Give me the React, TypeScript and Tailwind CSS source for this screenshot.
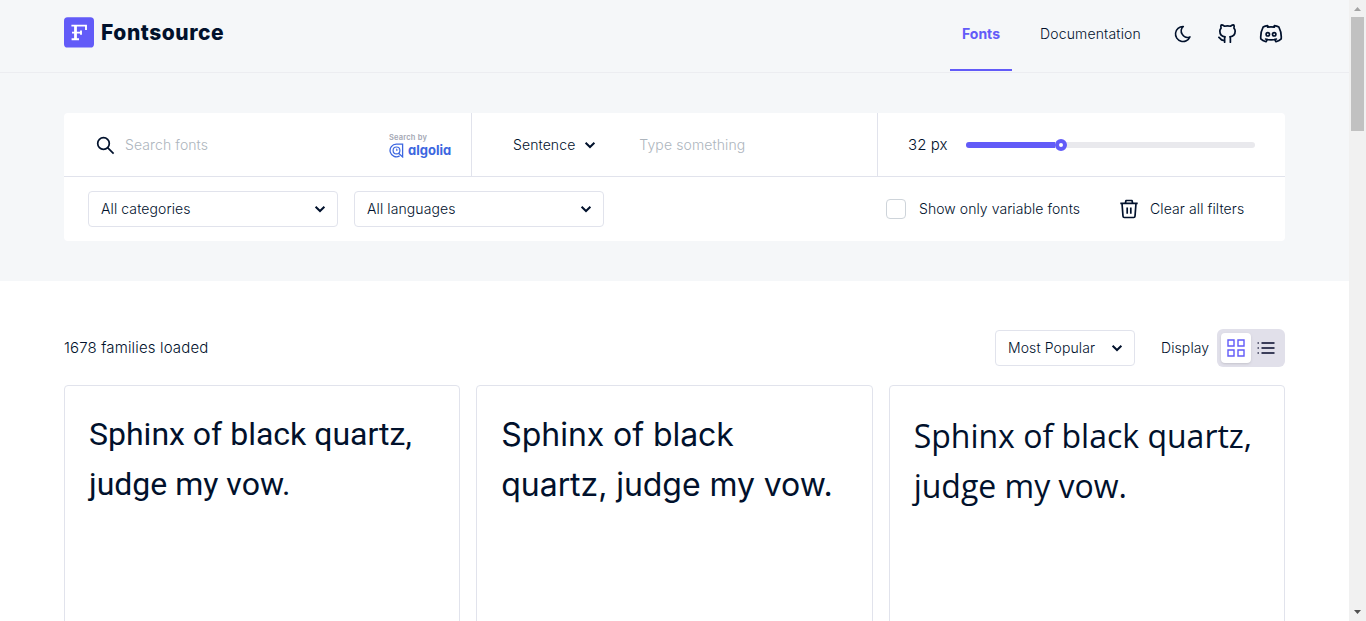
import React from "react";
import { TbBrandGithub, TbMoon } from "react-icons/tb";

function Chevron() {
  return (
    <svg width="12" height="8" viewBox="0 0 12 8" fill="none" className="shrink-0">
      <path d="M1.6 1.8 6 6 10.4 1.8" stroke="#01112c" strokeWidth="2" />
    </svg>
  );
}

function Logo() {
  return (
    <svg width="30" height="31" viewBox="0 0 30 31" className="shrink-0">
      <rect y=".3" width="30" height="30.2" rx="3.6" fill="#625bf8" />
      <path d="M7.4 8.6H22V13M7.6 22.2H15M8 15.6H17.6M17 13.4V17.8" stroke="#fff" strokeWidth="1.9" fill="none" />
      <path d="M11.5 8.6V22.2" stroke="#fff" strokeWidth="2.8" />
    </svg>
  );
}

function DiscordIcon() {
  return (
    <svg
      width="24"
      height="24"
      viewBox="0 0 24 24"
      fill="none"
      stroke="currentColor"
      strokeWidth="1.7"
      strokeLinecap="round"
      strokeLinejoin="round"
    >
      <path d="M9.2 5 8.6 3.700C6.900 3.900 5.400 4.400 4.100 5.100 2.300 8.500 1.400 12.100 1.800 16.900c1.600 1.600 3.300 2.200 5.200 2.800l1.300-2.200M14.800 5l.6-1.300c1.700.2 3.200.7 4.500 1.400 1.800 3.400 2.700 7 2.300 11.800-1.600 1.600-3.300 2.200-5.200 2.800l-1.300-2.200M8.600 5.200c2.300-.4 4.500-.4 6.800 0M6.600 17c3.500 1.200 7.300 1.200 10.800 0" />
      <circle cx="8.800" cy="12.300" r="1.700" />
      <circle cx="15.200" cy="12.300" r="1.700" />
    </svg>
  );
}

function AlgoliaMark() {
  return (
    <svg width="15" height="15" viewBox="0 0 15 15" fill="none" stroke="#3c66e0">
      <path d="M10.6 12.9A6.3 6.3 0 1 1 7.4 1.2H13.6V13.9L9.6 10.3" strokeWidth="1.3" />
      <circle cx="7.5" cy="7.4" r="3.4" strokeWidth="1.2" />
      <path d="M7.5 5.6V7.6L9.2 6.6" strokeWidth=".8" />
    </svg>
  );
}

function Select({ label, className }: { label: string; className: string }) {
  return (
    <button className={`flex h-9 items-center justify-between rounded-[4px] border border-[#e1e3ec] bg-white pr-[11px] pl-3 ${className}`}>
      <span>{label}</span>
      <Chevron />
    </button>
  );
}

function Card({ lines, font }: { lines: string[]; font: string }) {
  return (
    <article className="h-[332px] flex-1 rounded-[4px] border border-[#e1e3ec] px-6">
      <p className={`text-[32px] leading-[50px] whitespace-nowrap ${font}`}>
        {lines[0]}
        <br />
        {lines[1]}
      </p>
    </article>
  );
}

export default function App() {
  return (
    <div className="flex h-[621px] overflow-hidden bg-white font-['Inter',sans-serif] text-sm leading-5 font-light tracking-[0.1px] text-[#01112c]">
      <div className="w-[1349px] shrink-0">
        <header className="flex h-[73px] justify-between border-b border-[#ecedf1] bg-[#f5f7f9] pr-14 pl-16">
          <div className="flex items-start gap-[7px] pt-[17px]">
            <Logo />
            <span className="text-[21px] leading-[31px] font-extrabold tracking-[0.55px]">Fontsource</span>
          </div>
          <nav className="flex items-start">
            <a className="flex h-[71px] w-[62px] justify-center border-b-2 border-[#625bf8] pt-6 font-bold tracking-normal text-[#625bf8]">Fonts</a>
            <a className="ml-7 w-[121px] pt-6 tracking-[0.15px]">Documentation</a>
            <div className="flex h-[67px] items-center">
              <div className="flex w-11 justify-center">
                <TbMoon size={20} strokeWidth={1.9} />
              </div>
              <div className="flex w-11 justify-center">
                <TbBrandGithub size={23} strokeWidth={1.8} />
              </div>
              <div className="flex w-11 justify-center">
                <DiscordIcon />
              </div>
            </div>
          </nav>
        </header>
        <section className="h-[208px] bg-[#f5f7f9] px-16 pt-10">
          <div className="h-32 rounded-[4px] bg-white">
            <div className="flex h-16 border-b border-[#e1e3ec]">
              <div className="flex w-[408px] items-center border-r border-[#e1e3ec] pr-[19px] pl-8">
                <svg width="19" height="19" viewBox="0 0 19 19" fill="none" stroke="#01112c" strokeWidth="1.7" className="mt-px">
                  <circle cx="7.5" cy="7.5" r="5.8" />
                  <path d="m11.6 11.6 6 6" />
                </svg>
                <span className="ml-[10px] flex-1 text-[#adb5bd]">Search fonts</span>
                <div className="flex w-[63px] flex-col pt-[2px]">
                  <span className="text-[7.5px] leading-[9px] font-semibold tracking-[0.2px] text-[#a3a7b3]">Search by</span>
                  <div className="flex items-center gap-1">
                    <AlgoliaMark />
                    <span className="text-[13px] leading-[16px] font-bold tracking-normal text-[#3c66e0] [font-feature-settings:'cv11']">algolia</span>
                  </div>
                </div>
              </div>
              <div className="flex w-[406px] items-center border-r border-[#e1e3ec] pl-[41px]">
                <span className="mr-[9px]">Sentence</span>
                <Chevron />
                <span className="ml-[43px] text-[#adb5bd]">Type something</span>
              </div>
              <div className="flex flex-1 items-center pl-[30px]">
                <span className="w-[58px] text-[15px]">32 px</span>
                <div className="flex h-[6px] w-[289px] items-center rounded-full bg-[#e9e9ed]">
                  <div className="h-[6px] w-[89px] rounded-l-full bg-[#625bf8]" />
                  <div className="size-3 rounded-full border-4 border-[#625bf8] bg-white" />
                </div>
              </div>
            </div>
            <div className="flex h-16 items-center px-6">
              <Select label="All categories" className="w-[250px]" />
              <Select label="All languages" className="ml-4 w-[250px]" />
              <div className="ml-[282px] size-5 rounded-[4px] border border-[#ced4da]" />
              <span className="ml-[13px] w-[201px] tracking-[0.06px]">Show only variable fonts</span>
              <svg width="18" height="20" viewBox="0 0 18 20" fill="none" stroke="#01112c" strokeWidth="1.7" strokeLinejoin="round" className="shrink-0">
                <path d="M.3 4.3h17.4M5.4 4l.6-2.5h6l.6 2.5M2 4.3l1 13q.1 1.2 1.3 1.2h9.4q1.2 0 1.3-1.2l1-13M7.2 8.5v6.3M10.8 8.5v6.3" />
              </svg>
              <span className="ml-3">Clear all filters</span>
            </div>
          </div>
        </section>
        <main className="px-16 pt-12">
          <div className="flex h-[38px] items-center">
            <span className="flex-1 text-[15px] tracking-[0.15px]">1678 families loaded</span>
            <Select label="Most Popular" className="w-[140px]" />
            <span className="ml-[26px] w-14">Display</span>
            <div className="flex h-[38px] w-[68px] items-center rounded-md bg-[#e1e0ea] pl-1">
              <div className="flex size-[30px] items-center justify-center rounded-[4px] bg-white shadow-sm">
                <svg width="18" height="18" viewBox="0 0 18 18" fill="none" stroke="#625bf8" strokeWidth="1.4">
                  <path d="M1 1h6v6H1zM11 1h6v6h-6zM1 11h6v6H1zM11 11h6v6h-6z" />
                </svg>
              </div>
              <svg width="18" height="14" viewBox="0 0 18 14" stroke="#3b3e5a" className="ml-[6px]">
                <path d="M4.5 2h13M4.5 7h13M4.5 12h13" strokeWidth="1.8" />
                <path d="M.5 2H2M.5 7H2M.5 12H2" strokeWidth="1.4" />
              </svg>
            </div>
          </div>
          <div className="mt-[18px] flex gap-4">
            <Card lines={["Sphinx of black quartz,", "judge my vow."]} font="pt-[23px] font-['Roboto',sans-serif] font-normal tracking-normal" />
            <Card lines={["Sphinx of black", "quartz, judge my vow."]} font="pt-[24px] font-['Inter',sans-serif] font-normal tracking-[-0.06px]" />
            <Card lines={["Sphinx of black quartz,", "judge my vow."]} font="pt-[25px] font-['Open_Sans',sans-serif] font-normal tracking-normal" />
          </div>
        </main>
      </div>
      <div className="flex w-[17px] flex-col items-center bg-[#f1f1f1]">
        <svg width="17" height="17" viewBox="0 0 17 17">
          <path d="M5 11h7L8.5 7z" fill="#a3a3a3" />
        </svg>
        <div className="h-[114px] w-[13px] bg-[#c1c1c1]" />
        <svg width="17" height="17" viewBox="0 0 17 17" className="mt-auto">
          <path d="M5 6h7l-3.5 4z" fill="#505050" />
        </svg>
      </div>
    </div>
  );
}
